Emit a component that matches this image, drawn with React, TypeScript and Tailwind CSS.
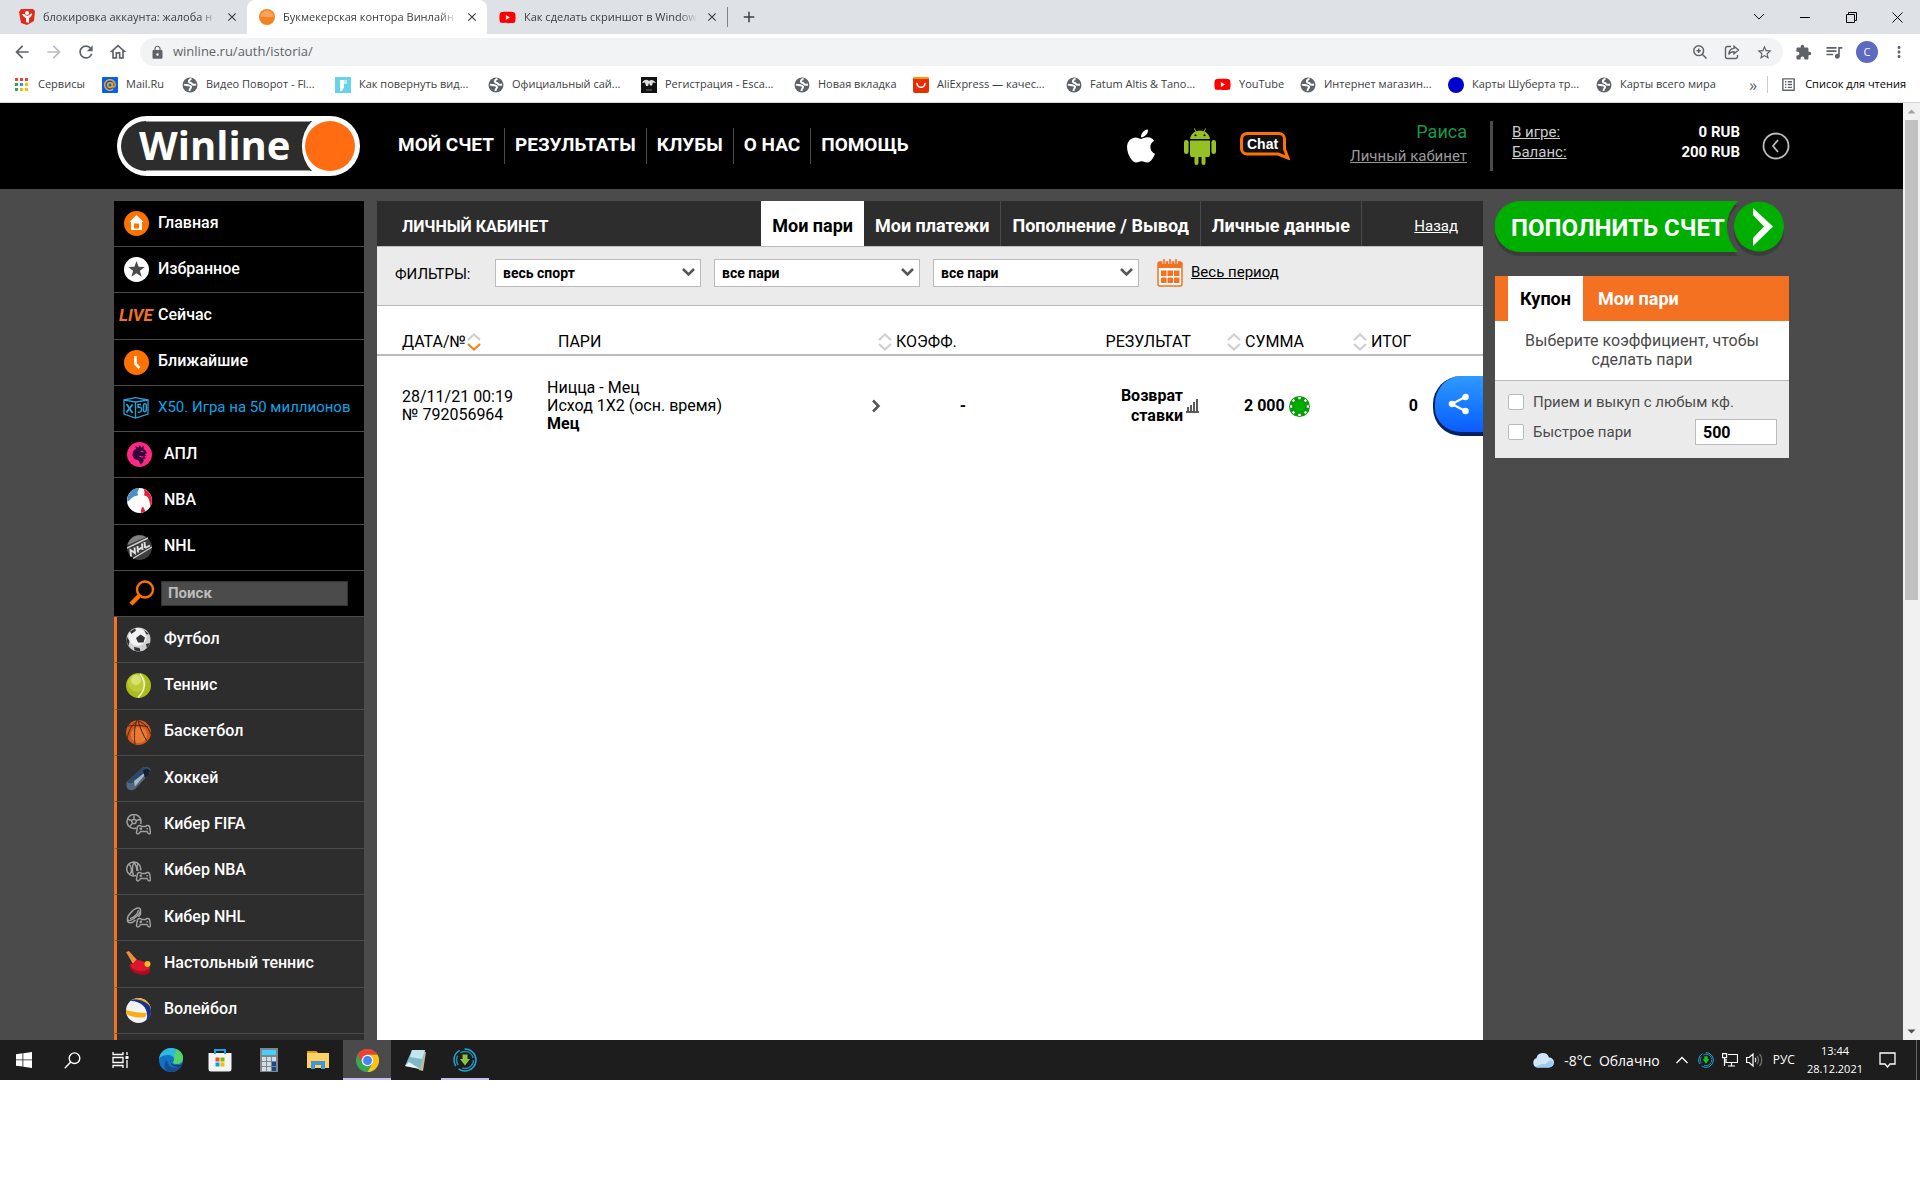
import React from 'react';
import { FaApple, FaYoutube } from 'react-icons/fa';
import {
    MdArrowBack, MdArrowForward, MdRefresh, MdOutlineHome, MdLock,
    MdStarBorder, MdExtension, MdOutlineQueueMusic, MdMoreVert, MdOutlineListAlt, MdClose, MdAdd,
} from 'react-icons/md';

/* ---------- Browser icons ---------- */

const GlobeIcon = () => (
    <svg width="16" height="16" viewBox="0 0 16 16">
        <circle cx="8" cy="8" r="7.500" fill="#5f6368" />
        <path d="M9.500 2C7.500 2.500 6.500 3.500 7 5c.5 1 2.500.5 3 1.800.4 1 1.500 1.200 4 .7M2 7.500c1.500.8 3.500.3 5 1 1.500.6 2.500.8 2 2-.5 1-1.500 1.500-1.500 3.500" fill="none" stroke="#fff" strokeWidth="1.900" />
    </svg>
);

const AppsIcon = () => {
    const colors = ['#ea4335', '#ea4335', '#ea4335', '#34a853', '#4285f4', '#fbbc04', '#34a853', '#fbbc04', '#fbbc04'];
    return (
        <svg width="16" height="16" viewBox="0 0 16 16">
            {colors.map((c, i) => (
                <rect key={i} x={1 + (i % 3) * 5} y={1 + Math.floor(i / 3) * 5} width="3" height="3" fill={c} />
            ))}
        </svg>
    );
};

const MailIcon = () => (
    <svg width="16" height="16" viewBox="0 0 16 16">
        <rect width="16" height="16" rx="1" fill="#005ff9" />
        <circle cx="8" cy="8" r="2.300" fill="none" stroke="#ff9e00" strokeWidth="1.600" />
        <path d="M10.500 5.500v3.300c0 1.900 2.700 1.400 2.700-.8a5.300 5.300 0 1 0-2 4.100" fill="none" stroke="#ff9e00" strokeWidth="1.500" />
    </svg>
);

const RotateIcon = () => (
    <svg width="16" height="16" viewBox="0 0 16 16">
        <rect width="16" height="16" fill="#67d3ea" />
        <path d="M5 14V3h7v4H9v3l-2 4z" fill="#fff" />
        <path d="M9 3h3v4H9z" fill="#b9edf6" />
    </svg>
);

const EscapeIcon = () => (
    <svg width="16" height="16" viewBox="0 0 16 16">
        <rect width="16" height="16" fill="#111" />
        <path d="M1 6c2-4 5-4 7-2 2-2 5-1 7 2l-3-.5-1 3H9L8 6 7 9H5L4 5.500z" fill="#ddd" />
        <path d="M5 13h6" stroke="#555" strokeWidth="1.500" />
    </svg>
);

const AliIcon = () => (
    <svg width="16" height="16" viewBox="0 0 16 16">
        <rect width="16" height="16" rx="2" fill="#e62e04" />
        <path d="M0 2a2 2 0 0 1 2-2h12a2 2 0 0 1 2 2z" fill="#ff9700" />
        <path d="M4 6.500c.5 5 7.500 5 8 0" fill="none" stroke="#fff" strokeWidth="1.500" strokeLinecap="round" />
    </svg>
);

const BlueDot = () => (
    <svg width="16" height="16" viewBox="0 0 16 16"><circle cx="8" cy="8" r="8" fill="#0000cd" /></svg>
);

const ReviewIcon = () => (
    <svg width="16" height="16" viewBox="0 0 16 16">
        <path d="M2 0h12l2 2-1 10-7 4-6-2L0 3z" fill="#e22b1c" />
        <path d="M3 5c1 2 2 3 4 4v4l3 1V9c2-1 3-3 3-5l-3 2-2 1-3-2z" fill="#fff" />
        <circle cx="8" cy="4" r="2" fill="#fff" />
    </svg>
);

const OrangeBall = () => (
    <svg width="16" height="16" viewBox="0 0 16 16">
        <circle cx="8" cy="8" r="8" fill="#f58220" />
        <path d="M1.500 8a6.500 6.500 0 0 1 13 0z" fill="#f9a35c" />
    </svg>
);

const ZoomIcon = () => (
    <svg width="16" height="16" viewBox="0 0 16 16" fill="none" stroke="#5f6368" strokeWidth="1.500">
        <circle cx="6.700" cy="6.700" r="4.900" />
        <path d="m10.300 10.300 4.200 4.200M6.700 4.500v4.400M4.500 6.700h4.400" />
    </svg>
);

const ShareArrow = () => (
    <svg width="16" height="16" viewBox="0 0 16 16" fill="none" stroke="#5f6368" strokeWidth="1.400">
        <path d="M7 2.500H3.500a2 2 0 0 0-2 2v8a2 2 0 0 0 2 2h8a2 2 0 0 0 2-2V11" />
        <path d="M10 2.200 14.500 6 10 9.800V7.600C7.500 7.500 6 8.500 4.800 10.500 5 7 7 4.600 10 4.400z" />
    </svg>
);

/* ---------- Site icons ---------- */

const Logo = () => (
    <svg width="243" height="60" viewBox="0 0 243 60" aria-label="Winline">
        <rect width="243" height="60" rx="30" fill="#fff" />
        <path d="M29 5H195A36 36 0 0 0 195 55H29A25 25 0 0 1 29 5z" fill="#2d2d2d" />
        <path d="M29 5.500H193M29 54.500H193" stroke="#999" strokeWidth="1" />
        <circle cx="213" cy="30" r="25" fill="#ff6c12" />
        <text x="22" y="44" fill="#fff" fontFamily="'Open Sans', sans-serif" fontWeight="700" fontSize="40">Winline</text>
    </svg>
);

const AndroidIcon = () => (
    <svg width="32" height="37" viewBox="0 0 32 37" fill="#97c024">
        <path d="M6 11C6.500 7 9 4.600 11.500 3.500L9.800.8l.8-.5 1.800 2.900a11 11 0 0 1 7.200 0L21.400.3l.8.5-1.700 2.700C23 4.600 25.500 7 26 11z" />
        <path d="M6 12.500h20V27a2 2 0 0 1-2 2h-2.500v6a2 2 0 0 1-4 0v-6h-3v6a2 2 0 0 1-4 0v-6H8a2 2 0 0 1-2-2z" />
        <rect x="0" y="12" width="4.600" height="14" rx="2.300" />
        <rect x="27.400" y="12" width="4.600" height="14" rx="2.300" />
        <circle cx="11.500" cy="7.300" r="1" fill="#000" />
        <circle cx="20.500" cy="7.300" r="1" fill="#000" />
    </svg>
);

const ChatIcon = () => (
    <svg width="50" height="28" viewBox="0 0 50 28">
        <path d="M7 1.500h32a5.500 5.500 0 0 1 5.500 5.500v10L48 26l-10-4H7A5.500 5.500 0 0 1 1.500 16.500V7A5.500 5.500 0 0 1 7 1.500z" fill="#111" stroke="#ff7200" strokeWidth="3" />
        <text x="7" y="17" fill="#fff" fontFamily="'Liberation Sans', sans-serif" fontWeight="700" fontSize="14">Chat</text>
    </svg>
);

const HomeBadge = () => (
    <svg width="25" height="25" viewBox="0 0 25 25">
        <circle cx="12.500" cy="12.500" r="12.500" fill="#ff7200" />
        <path d="M12.500 4 19.500 11h-1.500v8H7v-8H5.500z" fill="#fff" />
        <rect x="10" y="12.500" width="5" height="5" fill="#ff7200" />
    </svg>
);

const StarBadge = () => (
    <svg width="25" height="25" viewBox="0 0 25 25">
        <circle cx="12.500" cy="12.500" r="12.500" fill="#fff" />
        <path d="m12.500 4 2.100 5.800 6.200.2-4.900 3.800 1.700 6-5.100-3.500-5.100 3.500 1.700-6L4.200 10l6.200-.2z" fill="#4b4b4b" />
    </svg>
);

const ClockBadge = () => (
    <svg width="25" height="25" viewBox="0 0 25 25">
        <circle cx="12.500" cy="12.500" r="12.500" fill="#ff7200" />
        <path d="M11.500 6v8l4 4" fill="none" stroke="#fff" strokeWidth="2.600" />
    </svg>
);

const X50Icon = () => (
    <svg width="26" height="22" viewBox="0 0 26 22" fill="none" stroke="#2a9fd6" strokeWidth="1.300">
        <path d="M1 3v14l11.500 4L25 17V3L12.500 5zM1 3l11.500-2.300L25 3M12.500 5v16" />
        <path d="m3.500 7 6 9M9.500 7.500l-6 8" strokeWidth="1.900" />
        <path d="M18 7.500h-3v3c2.500-.8 3.500 0 3.500 2s-1 3-3.800 2.800M20.500 8v5.500c0 1.800 2.800 1.400 2.800-.6V8c0-1.800-2.800-1.500-2.800 0z" strokeWidth="1.500" />
    </svg>
);

const LionIcon = () => (
    <svg width="25" height="25" viewBox="0 0 25 25">
        <circle cx="12.500" cy="12.500" r="12.500" fill="#ff2882" />
        <path d="M9 7 8.500 4l3 1.500L13 3l1 2.500L17 4l-.5 3c2 1 3 2.500 3.200 4.500l-2.200.5 2 1.500-2 1 1.500 2-2.500.5c.5 2-.5 4-2.500 5.500-1.500-1-1.500-3-3-4.500-3 0-5-2-5.500-4.500C5.300 10.500 6.500 8 9 7z" fill="#37003c" />
        <path d="m13.500 9 3 1M12.500 14l2 1 1.500-.5" fill="none" stroke="#ff2882" strokeWidth="1.100" />
    </svg>
);

const NbaIcon = () => (
    <svg width="25" height="25" viewBox="0 0 25 25">
        <circle cx="12.500" cy="12.500" r="12.500" fill="#fff" />
        <path d="M12 0A12.500 12.500 0 0 0 .2 13.500C3 13 4 9.500 7 8.500L12 7z" fill="#4a90c8" />
        <path d="M17 1a12.500 12.500 0 0 1 6.500 17.500c-1-4-1-9-4.500-10.500L16 7zM14 25c0-3 0-5 2-6.500l2.500 5z" fill="#e5203f" />
        <circle cx="14" cy="4.500" r="3.500" fill="#fff" />
    </svg>
);

const NhlIcon = () => (
    <svg width="25" height="25" viewBox="0 0 25 25">
        <circle cx="12.500" cy="12.500" r="12.500" fill="#3d3d3d" />
        <path d="M.5 10A12.500 12.500 0 0 1 19 2z" fill="#808080" />
        <path d="M0 13 21 3M6 23.500 25 12" stroke="#ccc" strokeWidth="1.400" />
        <path d="m4 21.500-.5-6.500L8 18l-.5-5.500M11 17.500l-.5-6.500m5 4L15 8.500m-4 6.500 4.500-3M18 13l-.5-6m.5 6 5-2.500" fill="none" stroke="#e0e0e0" strokeWidth="1.900" />
    </svg>
);

const SoccerIcon = () => (
    <svg width="25" height="25" viewBox="0 0 25 25">
        <circle cx="12.500" cy="12.500" r="12" fill="#cfcfcf" />
        <circle cx="11.500" cy="10" r="9" fill="#f2f2f2" />
        <path d="m14.500 7.500 4.500 3-1.500 5h-5.500l-2-4.500zM4 4.500 9 1.500l1 2L5.500 7zM1 10l2.500 4-1 5L.5 14zM8 20l5.500 1 1 3.500-6-1zM20 17l4-1-3 5.500zM18 3l5 4-2.500.5z" fill="#2f3236" />
    </svg>
);

const TennisIcon = () => (
    <svg width="25" height="25" viewBox="0 0 25 25">
        <circle cx="12.500" cy="12.500" r="12.500" fill="#a9bb1e" />
        <circle cx="11" cy="10" r="9" fill="#bccb38" />
        <circle cx="10" cy="7" r="5" fill="#d8e270" />
        <path d="M14 1c6 7 6 16-2 23.500" fill="none" stroke="#f0f5c0" strokeWidth="1.600" />
    </svg>
);

const BasketIcon = () => (
    <svg width="25" height="25" viewBox="0 0 25 25">
        <circle cx="12.500" cy="12.500" r="12.500" fill="#d0591c" />
        <circle cx="13" cy="15" r="8" fill="#e97a34" />
        <path d="M2 6c8-1 14-1 20 1M11 0C8 8 8 17 9 24.500M12 0c2 8 5 15 9 21M11 1C6 5 2 11 1.500 18M13 1c6 3 10 7 11.500 13" fill="none" stroke="#4a2410" strokeWidth="1" />
    </svg>
);

const PuckIcon = () => (
    <svg width="25" height="25" viewBox="0 0 25 25">
        <path d="M.5 16 16 2c3-2 8-1 8.500 2l-1 4L9 23C5 26 .5 23 .5 20z" fill="#52677b" />
        <path d="M1 15.500 16 2c2-1 5-1 7 0L8 16.500c-3 1-6 1-7-1z" fill="#2c4a68" />
        <path d="m8 15 9-7h3l-3 3-8 9.500z" fill="#a5bac9" />
        <path d="M17 5c2-3 6-3 7 0l-1 4-4 3z" fill="#15202f" />
    </svg>
);

const Pad = () => (
    <path d="M11.500 12.500c1.500-1.500 3.500-1 4 0h4c1-1 3-1.500 4 0l1 6c-.5 2.500-2.500 1.500-3.500-1h-6.500c-1 2.500-3.500 3.500-4 1zM13.500 14.700h2.600M14.800 13.400V16M20.500 14.700h1.500" />
);

const CyberFootball = () => (
    <svg width="25" height="21" viewBox="0 0 25 21" fill="none" stroke="#a0a0a0" strokeWidth="1.500">
        <path d="M10.500 14a7 7 0 1 1 4-4M5.500 6.500 8 5l2.500 1.500-1 3h-3zM8 5V1.500M10.500 6.500l3.500-1M6.500 9.500 4 12M5.500 6.500 1.500 5" />
        <Pad />
    </svg>
);

const CyberBasket = () => (
    <svg width="25" height="21" viewBox="0 0 25 21" fill="none" stroke="#a0a0a0" strokeWidth="1.500">
        <path d="M10 14.500a7 7 0 1 1 4.500-5M8 1c-2 4-2 9-.5 14M8 1c2 3 3 6 3 9M3 3c3 3 3 6 1.500 10M12 3c-1 2-1 4 0 7" />
        <Pad />
    </svg>
);

const CyberHockey = () => (
    <svg width="25" height="21" viewBox="0 0 25 21" fill="none" stroke="#a0a0a0" strokeWidth="1.500">
        <path d="M1.500 12C1 9 8 1 12 1s3 4-1 8-9 6-9.500 3zv2c1 3 5 2 8-1M4 11.500c3.500 0 8-5 8.500-8.500M14.500 3v4l-2 3" />
        <Pad />
    </svg>
);

const PingPong = () => (
    <svg width="25" height="25" viewBox="0 0 25 25">
        <path d="m0 1 3-1 8 9-4 4z" fill="#e9903a" />
        <path d="M3 14c4-1 6-3 7-5 7 0 15 5 14 12-3 5-19 4-21-7z" fill="#a80f24" />
        <path d="M4 13.500c4-1 5.500-2.500 6.500-4.500 6 .5 12 3.500 13.500 8-6 6-18 3-20-3.500z" fill="#e0162f" />
        <circle cx="21.500" cy="13" r="3" fill="#f8b62c" />
    </svg>
);

const Volleyball = () => (
    <svg width="25" height="25" viewBox="0 0 25 25">
        <circle cx="12.500" cy="12.500" r="12.500" fill="#f3f3f3" />
        <path d="M5 2.500C14-2 25 3 25 13c0 4-2 8-5 10C24 13 17 3 5 3z" fill="#1d2f8d" />
        <path d="M9 .5C16-1 23 3 24.500 9 21 4 15 1.500 9 1.500zM0 12c7 2 14 3 21 3-1 3-2 4-3 4.500-7 .5-14-1-17.500-3.500z" fill="#f6b016" />
    </svg>
);

const SearchIcon = () => (
    <svg width="26" height="26" viewBox="0 0 26 26" fill="none" stroke="#ff7200">
        <circle cx="16" cy="9.500" r="8" strokeWidth="2.400" />
        <path d="M10 16 2 24" strokeWidth="4.500" />
    </svg>
);

const SortIcon = ({ active = false }: { active?: boolean }) => (
    <svg width="16" height="18" viewBox="0 0 16 18" fill="none" strokeWidth="2.200" className="shrink-0">
        <path d="m2 7 6-5.500L14 7" stroke="#cfcfcf" />
        <path d="m2 11 6 5.500 6-5.500" stroke={active ? '#f58220' : '#cfcfcf'} />
    </svg>
);

const CalendarIcon = () => (
    <svg width="26" height="28" viewBox="0 0 26 28">
        <rect x="1" y="3" width="24" height="24" rx="2" fill="#fff" stroke="#f37121" strokeWidth="1.500" />
        <path d="M1 5a2 2 0 0 1 2-2h20a2 2 0 0 1 2 2v4H1z" fill="#f37121" />
        <path d="M7 0v5M13 0v5M19 0v5" stroke="#ebebeb" strokeWidth="3.400" />
        <path d="M7 0v5M13 0v5M19 0v5" stroke="#f37121" strokeWidth="1.600" />
        {[4, 10.5, 17].map((x) => [11.5, 18.5].map((y) => (
            <rect key={`${x}-${y}`} x={x} y={y} width="5.500" height="5.500" fill="#f37121" />
        )))}
    </svg>
);

const ChipIcon = () => (
    <svg width="21" height="21" viewBox="0 0 21 21">
        <circle cx="10.500" cy="10.500" r="10.500" fill="#0a9a0a" />
        {[0, 45, 90, 135, 180, 225, 270, 315].map((angle) => (
            <rect key={angle} x="9.300" y="1" width="2.400" height="2.200" fill="#fff" transform={`rotate(${angle} 10.500 10.500)`} />
        ))}
        <circle cx="10.500" cy="10.500" r="5.500" fill="#00ae00" />
    </svg>
);

const BarsIcon = () => (
    <svg width="13" height="14" viewBox="0 0 13 14" fill="#5a5a5a">
        <path d="M0 12h13v2H0zM1 8h2v5H1zM4 6h2v7H4zM7 3h2v10H7zM10 0h2v13h-2z" />
    </svg>
);

const SwirlIcon = ({ size = 24, arrow = '#8bc53f' }: { size?: number; arrow?: string }) => (
    <svg width={size} height={size} viewBox="0 0 24 24" fill="none" stroke="#1ea5d6" strokeWidth="1.500">
        <circle cx="12" cy="12" r="11" strokeDasharray="24 4 18 5" />
        <circle cx="12" cy="12" r="8.500" strokeDasharray="16 5 10 4" opacity=".8" />
        <path d="M9.500 6.500h5V11H17l-5 6.500L7 11h2.500z" fill={arrow} stroke="none" />
    </svg>
);

/* ---------- Data ---------- */

const tabs = [
    { title: 'блокировка аккаунта: жалоба н', icon: <ReviewIcon />, active: false },
    { title: 'Букмекерская контора Винлайн', icon: <OrangeBall />, active: true },
    { title: 'Как сделать скриншот в Window', icon: <FaYoutube size={17} color="#f00" />, active: false },
];

const bookmarks = [
    { title: 'Сервисы', icon: <AppsIcon />, width: 'w-[88px]' },
    { title: 'Mail.Ru', icon: <MailIcon />, width: 'w-[80px]' },
    { title: 'Видео Поворот - Fl...', icon: <GlobeIcon />, width: 'w-[153px]' },
    { title: 'Как повернуть вид...', icon: <RotateIcon />, width: 'w-[153px]' },
    { title: 'Официальный сай...', icon: <GlobeIcon />, width: 'w-[153px]' },
    { title: 'Регистрация - Esca...', icon: <EscapeIcon />, width: 'w-[153px]' },
    { title: 'Новая вкладка', icon: <GlobeIcon />, width: 'w-[119px]' },
    { title: 'AliExpress — качес...', icon: <AliIcon />, width: 'w-[153px]' },
    { title: 'Fatum Altis & Tano...', icon: <GlobeIcon />, width: 'w-[148px]' },
    { title: 'YouTube', icon: <FaYoutube size={17} color="#f00" />, width: 'w-[86px]' },
    { title: 'Интернет магазин...', icon: <GlobeIcon />, width: 'w-[148px]' },
    { title: 'Карты Шуберта тр...', icon: <BlueDot />, width: 'w-[148px]' },
    { title: 'Карты всего мира', icon: <GlobeIcon />, width: 'w-[120px]' },
];

const topItems = [
    { title: 'Главная', icon: <HomeBadge /> },
    { title: 'Избранное', icon: <StarBadge /> },
    { title: 'Сейчас', icon: <span className="text-[17px] font-bold italic text-[#f37121]">LIVE</span> },
    { title: 'Ближайшие', icon: <ClockBadge /> },
    { title: 'X50. Игра на 50 миллионов', icon: <X50Icon />, blue: true },
];

const leagues = [
    { title: 'АПЛ', icon: <LionIcon /> },
    { title: 'NBA', icon: <NbaIcon /> },
    { title: 'NHL', icon: <NhlIcon /> },
];

const sports = [
    { title: 'Футбол', icon: <SoccerIcon /> },
    { title: 'Теннис', icon: <TennisIcon /> },
    { title: 'Баскетбол', icon: <BasketIcon /> },
    { title: 'Хоккей', icon: <PuckIcon /> },
    { title: 'Кибер FIFA', icon: <CyberFootball /> },
    { title: 'Кибер NBA', icon: <CyberBasket /> },
    { title: 'Кибер NHL', icon: <CyberHockey /> },
    { title: 'Настольный теннис', icon: <PingPong /> },
    { title: 'Волейбол', icon: <Volleyball /> },
];

/* ---------- Browser chrome ---------- */

const TabStrip = () => (
    <div className="flex h-[34px] items-stretch bg-[#dee1e6] pl-[7px]">
        {tabs.map((tab) => (
            <div
                key={tab.title}
                className={`flex w-60 shrink-0 items-center gap-2 pr-2 pl-3 ${tab.active ? 'rounded-t-lg bg-white' : ''}`}
            >
                <span className="shrink-0">{tab.icon}</span>
                <span className="min-w-0 flex-1 overflow-hidden mask-r-from-90% whitespace-nowrap text-[11px]">{tab.title}</span>
                <button aria-label="Закрыть вкладку"><MdClose size={14} /></button>
            </div>
        ))}
        <div className="flex items-center gap-3">
            <span className="h-5 w-px bg-[#808387]" />
            <button aria-label="Новая вкладка"><MdAdd size={18} /></button>
        </div>
        <div className="ml-auto flex items-center text-black">
            <button className="flex w-[46px] justify-center" aria-label="Поиск вкладок">
                <svg width="12" height="8" viewBox="0 0 12 8" fill="none" stroke="currentColor"><path d="m1 1 5 5 5-5" /></svg>
            </button>
            <button className="flex w-[46px] justify-center" aria-label="Свернуть">
                <svg width="10" height="10" viewBox="0 0 10 10"><path d="M0 5h10v1H0z" /></svg>
            </button>
            <button className="flex w-[46px] justify-center" aria-label="Развернуть">
                <svg width="11" height="11" viewBox="0 0 11 11" fill="none" stroke="currentColor"><path d="M.5 2.500h8v8h-8zM2.500 2.500v-2h8v8h-2" /></svg>
            </button>
            <button className="flex w-[46px] justify-center" aria-label="Закрыть">
                <svg width="11" height="11" viewBox="0 0 11 11" fill="none" stroke="currentColor"><path d="m.5.5 10 10M10.500.5l-10 10" /></svg>
            </button>
        </div>
    </div>
);

const Toolbar = () => (
    <div className="flex h-9 items-center bg-white px-3 text-[#5f6368]">
        <div className="flex items-center gap-3">
            <button aria-label="Назад"><MdArrowBack size={20} /></button>
            <button aria-label="Вперед" className="text-[#babcbe]"><MdArrowForward size={20} /></button>
            <button aria-label="Обновить"><MdRefresh size={20} /></button>
            <button aria-label="Главная страница"><MdOutlineHome size={20} /></button>
        </div>
        <div className="ml-3 flex h-7 flex-1 items-center rounded-full bg-[#f1f3f4] px-[10px]">
            <MdLock size={15} />
            <input aria-label="Адрес" className="ml-2 flex-1 bg-transparent text-[13px] outline-none" defaultValue="winline.ru/auth/istoria/" />
            <div className="flex items-center gap-4">
                <ZoomIcon />
                <ShareArrow />
                <MdStarBorder size={17} />
            </div>
        </div>
        <div className="ml-3 flex items-center gap-3">
            <MdExtension size={17} />
            <MdOutlineQueueMusic size={20} />
            <span className="flex h-[22px] w-[22px] items-center justify-center rounded-full bg-[#5c6bc0] text-[11px] text-white">C</span>
            <MdMoreVert size={18} />
        </div>
    </div>
);

const Bookmarks = () => (
    <div className="flex h-[33px] items-center border-b border-[#d5d7da] bg-white pr-[14px] pb-[3px] pl-[14px] text-[11px] text-[#3c4043]">
        {bookmarks.map((b) => (
            <a key={b.title} href="#" className={`flex shrink-0 items-center gap-2 whitespace-nowrap ${b.width}`}>
                {b.icon}
                {b.title}
            </a>
        ))}
        <span className="ml-auto text-base leading-5 text-[#5f6368]">»</span>
        <a href="#" className="ml-[10px] flex items-center gap-2 border-l border-[#cacdd1] pl-3 whitespace-nowrap text-black">
            <MdOutlineListAlt size={17} color="#5f6368" />
            Список для чтения
        </a>
    </div>
);

/* ---------- Site ---------- */

const Header = () => (
    <header className="flex h-[86px] items-center bg-black px-[117px] text-white">
        <a href="#"><Logo /></a>
        <nav className="ml-7 flex items-center text-[19px] font-bold">
            {['МОЙ СЧЕТ', 'РЕЗУЛЬТАТЫ', 'КЛУБЫ', 'О НАС', 'ПОМОЩЬ'].map((item) => (
                <a key={item} href="#" className="flex h-9 items-center border-l border-[#4b4b4b] px-[10px] pb-0.5 whitespace-nowrap first:border-l-0">
                    {item}
                </a>
            ))}
        </nav>
        <div className="ml-auto flex items-center">
            <FaApple size={38} />
            <span className="ml-6"><AndroidIcon /></span>
            <span className="ml-6"><ChatIcon /></span>
            <div className="mb-1 ml-[60px] flex h-12 flex-col items-end justify-between">
                <span className="text-[18px] leading-6 text-[#159a48]">Раиса</span>
                <a href="#" className="text-[15px] leading-6 text-[#999] underline">Личный кабинет</a>
            </div>
            <div className="ml-[23px] h-[50px] w-[3px] bg-[#4b4b4b]" />
            <div className="ml-[19px] flex w-[228px] flex-col pb-2 text-[15px] leading-5">
                <div className="flex justify-between">
                    <a href="#" className="text-[#ccc] underline">В игре:</a>
                    <span className="font-bold">0 RUB</span>
                </div>
                <div className="flex justify-between">
                    <a href="#" className="text-[#ccc] underline">Баланс:</a>
                    <span className="font-bold">200 RUB</span>
                </div>
            </div>
            <button className="-mr-1 ml-[22px]" aria-label="Скрыть">
                <svg width="28" height="28" viewBox="0 0 28 28" fill="none" stroke="#bbb" strokeWidth="1.800">
                    <circle cx="14" cy="14" r="12.500" />
                    <path d="m16 8-5 6 5 6" />
                </svg>
            </button>
        </div>
    </header>
);

const Sidebar = () => (
    <aside className="w-[250px] shrink-0 text-[16px] font-medium text-white">
        <div className="grid h-[416px] auto-rows-fr bg-black">
            {topItems.map((item) => (
                <a key={item.title} href="#" className={`flex items-center border-b border-[#4b4b4b] whitespace-nowrap ${item.blue ? 'text-[15px] font-normal text-[#0da5e8]' : ''}`}>
                    <span className="flex w-11 shrink-0 justify-center">{item.icon}</span>
                    <span className="pb-0.5">{item.title}</span>
                </a>
            ))}
            {leagues.map((item) => (
                <a key={item.title} href="#" className="flex items-center border-b border-[#4b4b4b]">
                    <span className="flex w-[50px] justify-center">{item.icon}</span>
                    <span className="pb-0.5">{item.title}</span>
                </a>
            ))}
            <div className="flex items-center gap-[6px] border-b border-[#4b4b4b] pr-4 pl-[15px]">
                <label htmlFor="search"><SearchIcon /></label>
                <input
                    id="search"
                    placeholder="Поиск"
                    className="h-[25px] w-full min-w-0 border border-[#333] bg-[#4b4b4b] px-[6px] text-[15px] font-bold placeholder:text-[#bbb]"
                />
            </div>
        </div>
        <div className="grid h-[417px] auto-rows-fr bg-[#2d2d2d]">
            {sports.map((item) => (
                <a key={item.title} href="#" className="flex items-center border-b border-l-3 border-b-[#4b4b4b] border-l-[#f37121]">
                    <span className="flex w-[47px] justify-center pr-1">{item.icon}</span>
                    <span className="pb-0.5">{item.title}</span>
                </a>
            ))}
        </div>
        <div className="h-[6px] border-l-3 border-[#f37121] bg-[#2d2d2d]" />
    </aside>
);

const Filter = ({ id, value }: { id: string; value: string }) => (
    <div className="relative">
        <select id={id} aria-label={value} className="h-7 w-[206px] appearance-none border border-[#bbb] bg-white px-[7px] text-[14px] font-bold text-black">
            <option>{value}</option>
        </select>
        <svg className="pointer-events-none absolute top-2 right-[5px]" width="15" height="11" viewBox="0 0 15 11">
            <path d="m2 2 5.500 5.500L13 2" fill="none" stroke="#555" strokeWidth="2.500" />
        </svg>
    </div>
);

const Cabinet = () => (
    <main className="min-w-0 flex-1 bg-white text-[15px] text-black">
        <div className="flex h-[45px] items-stretch bg-[#2d2d2d] pl-[25px] font-bold text-white">
            <h1 className="flex flex-1 items-center pt-1.5 text-[16px]">ЛИЧНЫЙ КАБИНЕТ</h1>
            <nav className="flex items-stretch text-[18px] whitespace-nowrap">
                <a href="#" className="flex items-center bg-white px-[11px] pt-1 text-black">Мои пари</a>
                {['Мои платежи', 'Пополнение / Вывод', 'Личные данные'].map((item) => (
                    <a key={item} href="#" className="flex items-center border-r border-[#4b4b4b] px-[11px] pt-1">{item}</a>
                ))}
            </nav>
            <a href="#" className="flex w-[121px] items-center justify-end pt-1.5 pr-[25px] text-[15px] font-normal underline">Назад</a>
        </div>
        <div className="flex h-[60px] items-start border-y border-[#bbb] bg-[#ebebeb] pt-3 pl-[18px]">
            <label htmlFor="sport" className="w-[100px] pt-1">ФИЛЬТРЫ:</label>
            <div className="flex gap-[13px]">
                <Filter id="sport" value="весь спорт" />
                <Filter id="bets" value="все пари" />
                <Filter id="kind" value="все пари" />
            </div>
            <a href="#" className="ml-[18px] flex items-center gap-2">
                <CalendarIcon />
                <span className="pb-0.5 underline">Весь период</span>
            </a>
        </div>
        <table className="w-full table-fixed text-[16px]">
            <colgroup>
                <col className="w-[170px]" />
                <col />
                <col className="w-[172px]" />
                <col className="w-[177px]" />
                <col className="w-[126px]" />
                <col className="w-[81px]" />
                <col className="w-[50px]" />
            </colgroup>
            <thead>
                <tr className="h-[49px] border-b-2 border-[#bbb] text-left align-bottom">
                    <th className="pl-[25px] font-normal"><span className="flex items-center">ДАТА/№<SortIcon active /></span></th>
                    <th className="pl-[11px] font-normal">ПАРИ</th>
                    <th className="font-normal"><span className="flex items-center gap-[3px]"><SortIcon />КОЭФФ.</span></th>
                    <th className="pr-[35px] text-right font-normal">РЕЗУЛЬТАТ</th>
                    <th className="font-normal"><span className="flex items-center gap-[3px]"><SortIcon />СУММА</span></th>
                    <th className="font-normal"><span className="flex items-center gap-[3px]"><SortIcon />ИТОГ</span></th>
                    <th />
                </tr>
            </thead>
            <tbody>
                <tr className="leading-[18px]">
                    <td className="pt-5 pl-[25px]">28/11/21 00:19<br />№ 792056964</td>
                    <td className="pt-5">
                        <div className="flex items-center justify-between">
                            <div>Ницца - Мец<br />Исход 1X2 (осн. время)<br /><b>Мец</b></div>
                            <svg width="10" height="14" viewBox="0 0 10 14" className="-mr-1"><path d="m2 1.500 5.500 5.500L2 12.500" fill="none" stroke="#555" strokeWidth="2.500" /></svg>
                        </div>
                    </td>
                    <td className="pt-5 text-center font-bold">-</td>
                    <td className="pt-5 pr-[27px]">
                        <div className="flex items-center justify-end gap-[3px] text-right leading-5 font-bold">
                            <span>Возврат<br />ставки</span>
                            <BarsIcon />
                        </div>
                    </td>
                    <td className="pt-5 pl-[18px] font-bold"><span className="flex items-center gap-1">2 000<ChipIcon /></span></td>
                    <td className="pt-5 pr-[15px] text-right font-bold">0</td>
                    <td className="pt-5">
                        <button aria-label="Поделиться" className="flex h-[60px] w-[50px] items-center justify-center rounded-l-[28px] border-b-4 border-l-2 border-[#04225f] bg-linear-to-b from-[#3099ff] to-[#0d5bff]">
                            <svg width="22" height="22" viewBox="0 0 22 22" fill="#fff" stroke="#fff" strokeWidth="2.200">
                                <path d="M17 4 4 11l13 7" fill="none" />
                                <circle cx="17.500" cy="4" r="2.200" /><circle cx="4" cy="11" r="2.200" /><circle cx="17.500" cy="18" r="2.200" />
                            </svg>
                        </button>
                    </td>
                </tr>
            </tbody>
        </table>
    </main>
);

const Coupon = () => (
    <aside className="w-[294px] shrink-0 text-[15px] text-[#4b4b4b]">
        <button className="relative flex h-[55px] w-[290px] pt-[9px] pl-4 text-[24px] leading-9 font-bold whitespace-nowrap text-white">
            <svg className="absolute inset-0" width="290" height="55" viewBox="0 0 290 55">
                <path d="M25 4H243A35 35 0 0 0 243 55H25A25.500 25.500 0 0 1 25 4z" fill="#3c3c3c" />
                <circle cx="264" cy="30" r="25" fill="#3c3c3c" />
                <path d="M25 0H243A35 35 0 0 0 243 51H25A25.500 25.500 0 0 1 25 0z" fill="#00ae00" />
                <circle cx="264" cy="25.500" r="25" fill="#00ae00" />
                <path d="m258 7 20 18.500L258 45v-8l11-11.500L258 14z" fill="#fff" />
            </svg>
            <span className="relative">ПОПОЛНИТЬ СЧЕТ</span>
        </button>
        <div className="mt-5 flex h-[45px] items-stretch bg-[#f37121] pl-[13px] text-[18px] font-bold">
            <button className="w-[75px] bg-white text-black">Купон</button>
            <button className="px-[15px] text-white">Мои пари</button>
        </div>
        <p className="h-[60px] border-b border-[#bbb] bg-white px-5 pt-[10px] text-center text-[16px] leading-[19px]">
            Выберите коэффициент, чтобы сделать пари
        </p>
        <div className="flex flex-col bg-[#ebebeb] pt-[6px] pr-3 pb-[11px] pl-[13px]">
            <label className="flex h-[30px] items-center gap-[9px]">
                <input type="checkbox" className="size-4 appearance-none rounded-[2px] border border-[#bbb] bg-white" />
                Прием и выкуп с любым кф.
            </label>
            <div className="flex h-[30px] items-center justify-between">
                <label className="flex items-center gap-[9px]">
                    <input type="checkbox" className="size-4 appearance-none rounded-[2px] border border-[#bbb] bg-white" />
                    Быстрое пари
                </label>
                <input aria-label="Быстрое пари" defaultValue="500" className="h-[26px] w-[82px] border border-[#bbb] bg-white px-[7px] text-[16px] font-bold text-black" />
            </div>
        </div>
    </aside>
);

const Scrollbar = () => (
    <div className="flex w-[17px] shrink-0 flex-col items-center bg-[#f1f1f1]">
        <svg width="17" height="17" viewBox="0 0 17 17"><path d="m4.500 10.500 4-4 4 4z" fill="#a3a3a3" /></svg>
        <div className="h-[480px] w-[13px] bg-[#c1c1c1]" />
        <svg className="mt-auto" width="17" height="17" viewBox="0 0 17 17"><path d="m4.500 6.500 4 4 4-4z" fill="#505050" /></svg>
    </div>
);

/* ---------- Taskbar ---------- */

const WindowsIcon = () => (
    <svg width="16" height="16" viewBox="0 0 16 16" fill="#fff"><path d="M0 2.200 6.500 1.300v6.200H0zM7.300 1.200 16 0v7.500H7.300zM0 8.300h6.500v6.300L0 13.700zM7.300 8.300H16V16l-8.700-1.200z" /></svg>
);

const TaskSearchIcon = () => (
    <svg width="17" height="17" viewBox="0 0 17 17" fill="none" stroke="#fff" strokeWidth="1.400"><circle cx="10.500" cy="6.200" r="5.300" /><path d="M6.700 10 .8 16.200" /></svg>
);

const TaskViewIcon = () => (
    <svg width="17" height="16" viewBox="0 0 17 16" fill="none" stroke="#fff" strokeWidth="1.300">
        <path d="M1 0v2.500h10V0M1 5.500h10v5H1zM1 16v-2.500h10V16M15 0v3M15 8v8" /><path d="M13.500 4h3v3h-3z" fill="#fff" stroke="none" />
    </svg>
);

const EdgeIcon = () => (
    <svg width="24" height="24" viewBox="0 0 24 24">
        <circle cx="12" cy="12" r="12" fill="#1272c4" />
        <path d="M0 11C1 4 6 0 12 0c8 0 12 5.500 12 10 0 4-3 6-6.500 6-3 0-4-1-3-2.500C16 11 14 7 9.500 7 5 7 1.500 8.500 0 11z" fill="#2fb9dd" />
        <path d="M17 1c5 2 7 5.500 7 9 0 4-3 6-6.500 6-3 0-4-1-3-2.500 2-3 1-6 0-7C16 6 18 4 17 1z" fill="#53d467" />
        <path d="M8 12c0 6 6 10 14 6-3 5-9 7-13.500 5.500C5 21 4 15 8 12z" fill="#174c92" />
        <path d="M11.500 11.500c-1 2 .5 4.500 3.500 5.500 3 1 6 .5 8.500-1-1 2-2 2-4 2.500-4 .5-9-2-8-7z" fill="#1c1c1c" />
    </svg>
);

const StoreIcon = () => (
    <svg width="24" height="24" viewBox="0 0 24 24">
        <path d="M.5 5h23v16a2.500 2.500 0 0 1-2.500 2.500H3A2.500 2.500 0 0 1 .5 21z" fill="#f4f4f4" />
        <path d="M7 6V2h10v4" fill="none" stroke="#1a9fe8" strokeWidth="2" />
        <path d="M7.500 9.500h4v4h-4z" fill="#f25022" /><path d="M12.500 9.500h4v4h-4z" fill="#7fba00" />
        <path d="M7.500 14.500h4v4h-4z" fill="#00a4ef" /><path d="M12.500 14.500h4v4h-4z" fill="#ffb900" />
    </svg>
);

const CalcIcon = () => (
    <svg width="18" height="24" viewBox="0 0 18 24">
        <rect width="18" height="24" fill="#7d8790" /><rect x="2" y="2" width="14" height="5" fill="#45d0f5" />
        {[2, 7, 12].map((x) => [9, 14, 19].map((y) => (
            <rect key={`${x}-${y}`} x={x} y={y} width="4" height="4" fill={x === 12 && y > 9 ? '#164a8b' : '#d5dce2'} />
        )))}
    </svg>
);

const FolderIcon = () => (
    <svg width="22" height="20" viewBox="0 0 22 20">
        <path d="M0 1h9l2 2h11v15H0z" fill="#fcd063" /><path d="M0 1h9l1.500 2H0z" fill="#e19b13" />
        <path d="M4 19v-8h14v8h-4v-4H8v4z" fill="#3f96da" />
    </svg>
);

const ChromeIcon = () => (
    <svg width="23" height="23" viewBox="0 0 24 24">
        <circle cx="12" cy="12" r="12" fill="#34a853" />
        <path d="M1.600 6A12 12 0 0 1 22.400 6H12L6.800 15z" fill="#ea4335" />
        <path d="M22.400 6A12 12 0 0 1 12 24l5.200-9L12 6z" fill="#fbc116" />
        <circle cx="12" cy="12" r="6" fill="#fff" /><circle cx="12" cy="12" r="4.700" fill="#4285f4" />
    </svg>
);

const NotepadIcon = () => (
    <svg width="23" height="23" viewBox="0 0 23 23">
        <path d="m7 2 14 1-3 19-4-1z" fill="#c2b8a0" /><path d="M7 1h13l-5 19L0 17z" fill="#7fb9c6" />
        <path d="M7 1h13l-3 9L5 8z" fill="#c4e6ed" /><path d="m0 17 4-4 11 7z" fill="#e9f4f6" />
    </svg>
);

const apps = [
    { name: 'Edge', icon: <EdgeIcon />, state: '' },
    { name: 'Store', icon: <StoreIcon />, state: '' },
    { name: 'Calculator', icon: <CalcIcon />, state: '' },
    { name: 'Explorer', icon: <FolderIcon />, state: '' },
    { name: 'Chrome', icon: <ChromeIcon />, state: 'bg-[#4a4a4a] shadow-[inset_0_-2px_#c5bff5]' },
    { name: 'Notepad', icon: <NotepadIcon />, state: '' },
    { name: 'Downloads', icon: <SwirlIcon />, state: 'shadow-[inset_0_-2px_#c5bff5]' },
];

const Taskbar = () => (
    <footer className="flex h-10 items-stretch bg-[#1d1d1d] text-white">
        <button className="flex w-12 items-center justify-center" aria-label="Пуск"><WindowsIcon /></button>
        <button className="flex w-12 items-center justify-center" aria-label="Поиск"><TaskSearchIcon /></button>
        <button className="flex w-12 items-center justify-center" aria-label="Задачи"><TaskViewIcon /></button>
        <div className="ml-[3px] flex gap-px">
            {apps.map((app) => (
                <button key={app.name} aria-label={app.name} className={`flex w-12 items-center justify-center ${app.state}`}>{app.icon}</button>
            ))}
        </div>
        <div className="ml-auto flex items-center">
            <svg width="22" height="16" viewBox="0 0 22 16">
                <path d="M5 15.500a5 5 0 0 1-.5-9.500A6.500 6.500 0 0 1 17 5.500a5 5 0 0 1 0 10z" fill="#cfe6fb" />
                <path d="M3 14.500c4-1 6-3 9-2.500s4-3 7-4c4 2 2 7.500-2 7.500H5z" fill="#9ccbf3" />
            </svg>
            <span className="ml-[10px] text-[14px]">-8°C&nbsp; Облачно</span>
            <svg className="ml-4" width="12" height="8" viewBox="0 0 12 8" fill="none" stroke="#fff" strokeWidth="1.300"><path d="m.5 7 5.500-5.500L11.500 7" /></svg>
            <span className="ml-[10px]"><SwirlIcon size={16} arrow="#19c519" /></span>
            <svg className="ml-2" width="16" height="14" viewBox="0 0 16 14" fill="none" stroke="#fff" strokeWidth="1.200">
                <path d="M6 1.500h9.500v8H4V6M9.500 9.500V13M6 13h7M.6.6h4v4h-4zM2.500 4.600V13" />
            </svg>
            <svg className="ml-2" width="17" height="14" viewBox="0 0 17 14" fill="none" stroke="#fff" strokeWidth="1.200">
                <path d="M.6 4.500h2.500L7 1v12L3.100 9.500H.6zM9 5c1 1 1 3 0 4" /><path d="M11 3c2 2 2 6 0 8M13.500 1c3 3 3 9 0 12" stroke="#777" />
            </svg>
            <span className="ml-[10px] text-[12px]">РУС</span>
            <div className="ml-3 text-center text-[11px] leading-[18px]">13:44<br />28.12.2021</div>
            <svg className="ml-4" width="17" height="16" viewBox="0 0 17 16" fill="none" stroke="#fff" strokeWidth="1.300"><path d="M1 1h15v11h-5l-2.500 3L6 12H1z" /></svg>
            <span className="mr-[3px] ml-5 h-10 w-px bg-[#666]" />
        </div>
    </footer>
);

const App = () => {
    return (
        <div className="bg-white">
            <div className="font-['Open_Sans',sans-serif] text-[#3c4043]">
                <TabStrip />
                <Toolbar />
                <Bookmarks />
            </div>
            <div className="flex font-[Roboto,sans-serif]">
                <div className="min-w-0 flex-1 bg-[#4b4b4b]">
                    <Header />
                    <div className="flex px-[114px] pt-3">
                        <Sidebar />
                        <div className="ml-[13px] flex min-w-0 flex-1"><Cabinet /></div>
                        <div className="ml-3"><Coupon /></div>
                    </div>
                </div>
                <Scrollbar />
            </div>
            <div className="font-['Open_Sans',sans-serif]">
                <Taskbar />
            </div>
        </div>
    );
};

export default App;
